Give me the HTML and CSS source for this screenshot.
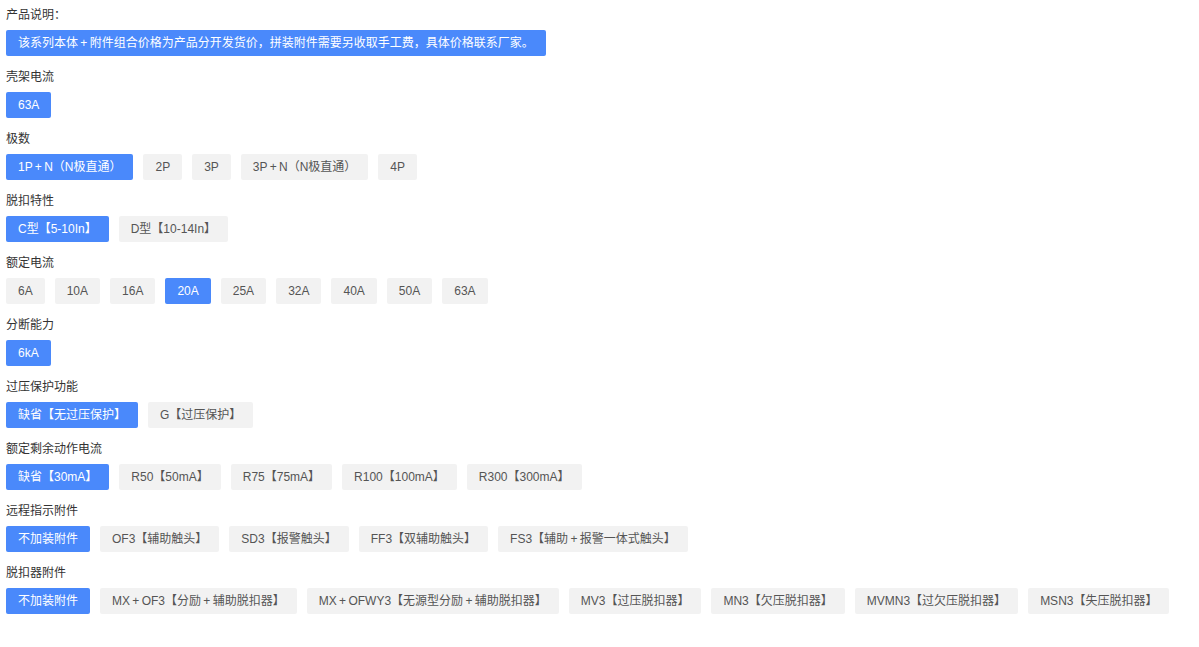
FILE: index.html
```html
<!DOCTYPE html>
<html lang="zh-CN">

<head>
    <meta charset="UTF-8">
    <meta name="viewport" content="width=device-width, initial-scale=1.0">
    <title>产品选型</title>
    <link rel="stylesheet" href="styles.css">
</head>

<body>
    <div class="container">
        <div class="group">
            <div class="group-title">产品说明：</div>
            <div class="options">
                <span class="opt active">该系列本体 + 附件组合价格为产品分开发货价，拼装附件需要另收取手工费，具体价格联系厂家。</span>
            </div>
        </div>

        <div class="group">
            <div class="group-title">壳架电流</div>
            <div class="options">
                <span class="opt active">63A</span>
            </div>
        </div>

        <div class="group">
            <div class="group-title">极数</div>
            <div class="options">
                <span class="opt active">1P + N（N极直通）</span>
                <span class="opt">2P</span>
                <span class="opt">3P</span>
                <span class="opt">3P + N（N极直通）</span>
                <span class="opt">4P</span>
            </div>
        </div>

        <div class="group">
            <div class="group-title">脱扣特性</div>
            <div class="options">
                <span class="opt active">C型【5-10In】</span>
                <span class="opt">D型【10-14In】</span>
            </div>
        </div>

        <div class="group">
            <div class="group-title">额定电流</div>
            <div class="options">
                <span class="opt">6A</span>
                <span class="opt">10A</span>
                <span class="opt">16A</span>
                <span class="opt active">20A</span>
                <span class="opt">25A</span>
                <span class="opt">32A</span>
                <span class="opt">40A</span>
                <span class="opt">50A</span>
                <span class="opt">63A</span>
            </div>
        </div>

        <div class="group">
            <div class="group-title">分断能力</div>
            <div class="options">
                <span class="opt active">6kA</span>
            </div>
        </div>

        <div class="group">
            <div class="group-title">过压保护功能</div>
            <div class="options">
                <span class="opt active">缺省【无过压保护】</span>
                <span class="opt">G【过压保护】</span>
            </div>
        </div>

        <div class="group">
            <div class="group-title">额定剩余动作电流</div>
            <div class="options">
                <span class="opt active">缺省【30mA】</span>
                <span class="opt">R50【50mA】</span>
                <span class="opt">R75【75mA】</span>
                <span class="opt">R100【100mA】</span>
                <span class="opt">R300【300mA】</span>
            </div>
        </div>

        <div class="group">
            <div class="group-title">远程指示附件</div>
            <div class="options">
                <span class="opt active">不加装附件</span>
                <span class="opt">OF3【辅助触头】</span>
                <span class="opt">SD3【报警触头】</span>
                <span class="opt">FF3【双辅助触头】</span>
                <span class="opt">FS3【辅助 + 报警一体式触头】</span>
            </div>
        </div>

        <div class="group">
            <div class="group-title">脱扣器附件</div>
            <div class="options">
                <span class="opt active">不加装附件</span>
                <span class="opt">MX + OF3【分励 + 辅助脱扣器】</span>
                <span class="opt">MX + OFWY3【无源型分励 + 辅助脱扣器】</span>
                <span class="opt">MV3【过压脱扣器】</span>
                <span class="opt">MN3【欠压脱扣器】</span>
                <span class="opt">MVMN3【过欠压脱扣器】</span>
                <span class="opt">MSN3【失压脱扣器】</span>
            </div>
        </div>
    </div>
</body>

</html>
```

FILE: styles.css
```css
body {
    font-family: "Liberation Sans", "Noto Sans CJK SC", sans-serif;
    font-size: 12px;
    color: #333;
    background-color: #fff;
    margin: 0;
    padding: 0;
}

.container {
    padding: 4px 6px;
}

.group {
    margin-bottom: 10px;
}

.group-title {
    line-height: 20px;
    padding-top: 1px;
    margin-bottom: 5px;
    color: #333;
}

.options {
    display: flex;
    flex-wrap: wrap;
    gap: 10px;
}

.opt {
    display: inline-block;
    height: 26px;
    line-height: 26px;
    padding: 0 12px;
    background-color: #f2f2f2;
    color: #555;
    border-radius: 2px;
    white-space: nowrap;
    word-spacing: -1px;
    cursor: pointer;
}

.opt.active {
    background-color: #4a89fb;
    color: #fff;
}
```
